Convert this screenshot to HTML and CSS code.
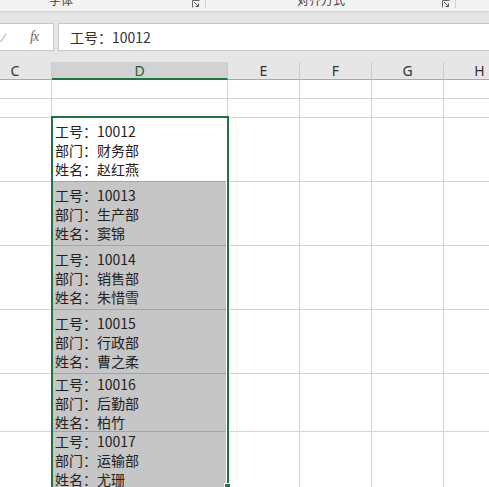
FILE: index.html
```html
<!DOCTYPE html>
<html lang="zh-CN">
<head>
<meta charset="utf-8">
<title>Sheet</title>
<link rel="stylesheet" href="styles.css">
</head>
<body>
<div class="ribbon">
  <div class="rgroup g1">
    <span class="rlabel l1">字体</span>
    <svg class="launcher" width="8" height="8" viewBox="0 0 8 8"><path d="M0.5 7.5V0.5H7.5" fill="none" stroke="#666" stroke-width="1"/><path d="M2 2L6.5 6.5M3.5 6.5H6.5V3.5" fill="none" stroke="#555" stroke-width="1"/></svg>
  </div>
  <div class="rgroup g2">
    <span class="rlabel l2">对齐方式</span>
    <svg class="launcher" width="8" height="8" viewBox="0 0 8 8"><path d="M0.5 7.5V0.5H7.5" fill="none" stroke="#666" stroke-width="1"/><path d="M2 2L6.5 6.5M3.5 6.5H6.5V3.5" fill="none" stroke="#555" stroke-width="1"/></svg>
  </div>
</div>
<div class="fbar">
  <div class="namebox">
    <svg class="check" width="8" height="10" viewBox="0 0 8 10"><path d="M-2 7L1 9.5L6 2" fill="none" stroke="#cfcfcf" stroke-width="1.6"/></svg>
    <span class="fx">fx</span>
  </div>
  <div class="finput">工号：10012</div>
</div>
<div class="sheet">
  <div class="colheads">
    <div class="ch c">C</div>
    <div class="ch d on">D</div>
    <div class="ch e">E</div>
    <div class="ch e">F</div>
    <div class="ch e">G</div>
    <div class="ch e">H</div>
  </div>
  <div class="row r-small">
    <div class="cell c"></div><div class="cell d"></div><div class="cell e"></div><div class="cell e"></div><div class="cell e"></div><div class="cell e"></div>
  </div>
  <div class="row r-small">
    <div class="cell c"></div><div class="cell d"></div><div class="cell e"></div><div class="cell e"></div><div class="cell e"></div><div class="cell e"></div>
  </div>
  <div class="row r-big">
    <div class="cell c"></div>
    <div class="cell d active pad4"><div>工号：10012</div><div>部门：财务部</div><div>姓名：赵红燕</div></div>
    <div class="cell e"></div><div class="cell e"></div><div class="cell e"></div><div class="cell e"></div>
  </div>
  <div class="row r-big">
    <div class="cell c"></div>
    <div class="cell d picked pad4"><div>工号：10013</div><div>部门：生产部</div><div>姓名：窦锦</div></div>
    <div class="cell e"></div><div class="cell e"></div><div class="cell e"></div><div class="cell e"></div>
  </div>
  <div class="row r-big">
    <div class="cell c"></div>
    <div class="cell d picked pad4"><div>工号：10014</div><div>部门：销售部</div><div>姓名：朱惜雪</div></div>
    <div class="cell e"></div><div class="cell e"></div><div class="cell e"></div><div class="cell e"></div>
  </div>
  <div class="row r-big">
    <div class="cell c"></div>
    <div class="cell d picked pad4"><div>工号：10015</div><div>部门：行政部</div><div>姓名：曹之柔</div></div>
    <div class="cell e"></div><div class="cell e"></div><div class="cell e"></div><div class="cell e"></div>
  </div>
  <div class="row r-mid">
    <div class="cell c"></div>
    <div class="cell d picked pad1"><div>工号：10016</div><div>部门：后勤部</div><div>姓名：柏竹</div></div>
    <div class="cell e"></div><div class="cell e"></div><div class="cell e"></div><div class="cell e"></div>
  </div>
  <div class="row r-last">
    <div class="cell c"></div>
    <div class="cell d picked pad0"><div>工号：10017</div><div>部门：运输部</div><div>姓名：尤珊</div></div>
    <div class="cell e"></div><div class="cell e"></div><div class="cell e"></div><div class="cell e"></div>
  </div>
  <div class="sel"></div>
  <div class="handle"></div>
</div>
</body>
</html>
```
FILE: styles.css
```css
html, body {
  margin: 0;
  padding: 0;
}
body {
  width: 489px;
  height: 487px;
  overflow: hidden;
  background: #ffffff;
  font-family: "Noto Sans CJK SC", "Noto Sans", sans-serif;
  color: #222;
}

/* ribbon strip */
.ribbon {
  position: relative;
  z-index: 1;
  height: 11px;
  background: #f3f3f3;
  display: flex;
  overflow: hidden;
  box-shadow: 0 1px 2px rgba(0, 0, 0, 0.13);
}
.rgroup {
  display: flex;
  align-items: flex-start;
  box-sizing: border-box;
  border-right: 1px solid #d2d2d2;
  height: 8px;
}
.g1 { width: 206px; }
.g2 { width: 250px; }
.rlabel {
  font-size: 12px;
  line-height: 12px;
  color: #444;
  margin-top: -6px;
  white-space: nowrap;
}
.l1 { margin-left: 49px; }
.l2 { margin-left: 91px; }
.launcher {
  margin-left: auto;
  margin-right: 5px;
  margin-top: 0;
}

/* formula bar */
.fbar {
  height: 51px;
  box-sizing: border-box;
  padding-top: 12px;
  background: #e6e6e6;
  display: flex;
  gap: 4px;
}
.namebox, .finput {
  height: 28px;
  box-sizing: border-box;
  background: #fff;
  border: 1px solid #c6c6c6;
}
.namebox {
  width: 54px;
  border-left: none;
  display: flex;
  align-items: center;
}
.check { margin-left: 0; }
.fx {
  margin-left: 22px;
  font-family: "Liberation Serif", "DejaVu Serif", serif;
  font-style: italic;
  font-size: 14px;
  color: #666;
  letter-spacing: -1px;
}
.finput {
  flex: 1;
  margin-right: -3px;
  padding-left: 11px;
  font-size: 14px;
  line-height: 26px;
  color: #333;
}

/* sheet */
.sheet {
  position: relative;
}
.colheads, .row {
  display: flex;
  margin-left: -21px;
}
.colheads {
  height: 18px;
  background: #e6e6e6;
}
.ch {
  box-sizing: border-box;
  height: 18px;
  border-right: 1px solid #cdcdcd;
  border-bottom: 1px solid #a9a9a9;
  text-align: center;
  font-family: "Noto Sans", sans-serif;
  font-size: 14px;
  line-height: 17px;
  color: #333;
}
.ch.on {
  background: #d2d2d2;
  border-bottom: 2px solid #217346;
  color: #1f5e3a;
}
.c { width: 73px; flex: none; }
.d { width: 176px; flex: none; }
.e { width: 72px; flex: none; }

.r-small { height: 19px; }
.r-big { height: 64px; }
.r-mid { height: 58px; }
.r-last { height: 70px; }

.cell {
  box-sizing: border-box;
  border-right: 1px solid #d4d4d4;
  border-bottom: 1px solid #d4d4d4;
  overflow: hidden;
}
.cell.d {
  padding-left: 3px;
  font-size: 14px;
  line-height: 19px;
  color: #222;
  white-space: nowrap;
}
.active {
  background: #fff;
  border-bottom-color: #a4a4a4;
}
.picked {
  background: #c6c6c6;
  border-bottom-color: #a4a4a4;
}
.pad4 { padding-top: 4px; }
.pad1 { padding-top: 1px; }
.pad0 { padding-top: 0; }

.sel {
  position: absolute;
  left: 51px;
  top: 54px;
  width: 178px;
  height: 420px;
  box-sizing: border-box;
  border: 2px solid #217346;
  box-shadow: inset -1px 0 0 #fff;
  pointer-events: none;
}
.handle {
  position: absolute;
  left: 224px;
  top: 421px;
  width: 7px;
  height: 7px;
  box-sizing: border-box;
  border: 1px solid #fff;
  background: #217346;
}
```
